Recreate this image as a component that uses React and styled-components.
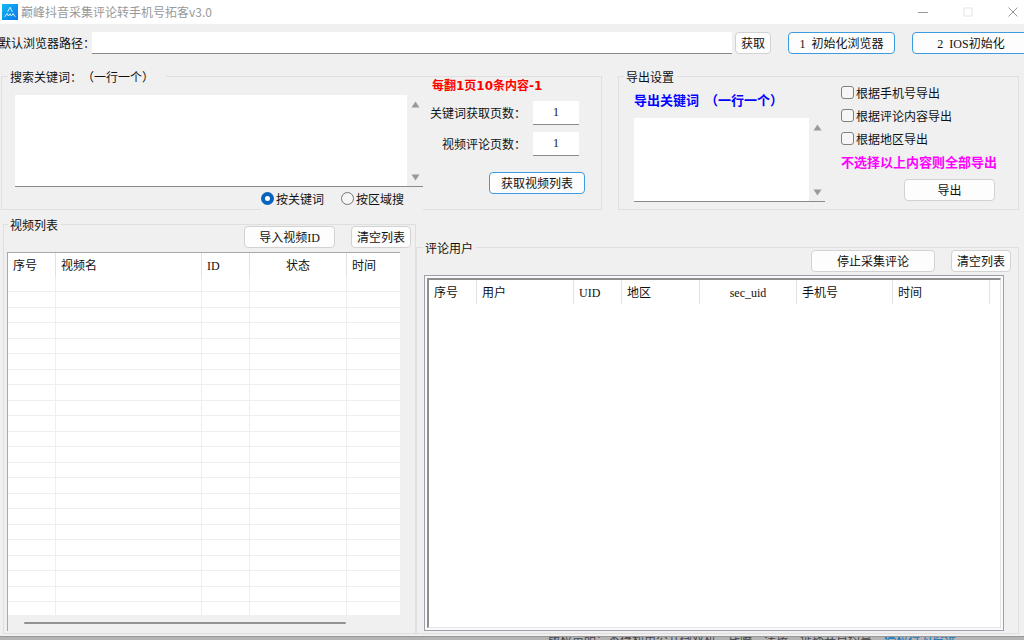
import React from 'react'
import styled, { createGlobalStyle } from 'styled-components'

const GlobalStyle = createGlobalStyle`
  * { box-sizing: border-box; }
  body {
    margin: 0;
    background: #f0f0f0;
    color: #111;
    font: 12px/16px "Noto Sans CJK SC", sans-serif;
    text-spacing-trim: space-all;
  }
  button, input, textarea { font: inherit; color: inherit; }
`

const Window = styled.div`
  display: flex;
  flex-direction: column;
  min-height: 100vh;
  overflow: hidden;
`

const TitleBar = styled.header`
  display: flex;
  align-items: center;
  height: 24px;
  padding: 0 6px 0 2px;
  background: #fff;
  color: #999;
`

const Title = styled.h1`
  flex: 1;
  margin: 0 0 0 3px;
  font-size: 12px;
  line-height: 22px;
  font-weight: 400;
`

const WindowButtons = styled.div`
  display: flex;
  gap: 35px;
`

const WindowButton = styled.button`
  display: flex;
  padding: 0;
  border: 0;
  background: none;
  color: ${({ $faint }) => ($faint ? '#e4e4e4' : '#999')};
`

const PathRow = styled.div`
  display: flex;
  align-items: center;
  padding-top: 8px;
  margin-right: -6px;
`

const PathLabel = styled.label`
  margin-left: -1px;
  width: 93px;
  white-space: nowrap;
`

const TextInput = styled.input`
  min-width: 0;
  height: ${({ $small }) => ($small ? '24px' : '22px')};
  padding: 0 4px;
  border: 0;
  border-bottom: 1px solid #8a8a8a;
  background: #fff;
  outline: 0;
  ${({ $small }) => ($small ? 'width: 46px; text-align: center; font-family: "Liberation Serif", serif;' : 'flex: 1;')}
`

const Button = styled.button`
  flex: none;
  width: ${({ $width }) => $width}px;
  height: 22px;
  margin-left: ${({ $left = 0 }) => $left}px;
  padding: 0;
  border: 1px solid ${({ $accent }) => ($accent ? '#3f9be0' : '#d2d2d2')};
  border-radius: 4px;
  background: #fdfdfd;
  line-height: 20px;
  white-space: nowrap;
`

const Latin = styled.span`
  font-family: "Liberation Serif", serif;
  white-space: pre;
`

const Settings = styled.div`
  display: grid;
  grid-template-columns: 601fr 401fr;
  gap: 16px;
  margin-top: 22px;
  padding: 0 5px 0 1px;
`

const Lists = styled.div`
  flex: 1;
  display: grid;
  grid-template-columns: 413fr 603fr;
  margin-top: 14px;
  padding: 0 5px 2px 3px;
`

const Group = styled.fieldset`
  display: flex;
  flex-direction: ${({ $column }) => ($column ? 'column' : 'row')};
  min-width: 0;
  margin: ${({ $top = 0 }) => $top}px 0 0;
  padding: ${({ $pad }) => $pad};
  border: 1px solid #dfdfdf;
`

// one pixel tall, so the content starts right under the border line
const Legend = styled.legend`
  height: 1px;
  margin-left: ${({ $left }) => $left}px;
  padding: 0 ${({ $right = 3 }) => $right}px 0 2px;
  line-height: 1px;
`

const Column = styled.div`
  display: flex;
  flex-direction: column;
  flex: ${({ $width }) => ($width ? `0 0 ${$width}px` : '1')};
  min-width: 0;
  padding-top: ${({ $top = 0 }) => $top}px;
`

const ScrollBox = styled.div`
  display: flex;
  height: ${({ $height }) => $height}px;
  border-bottom: 1px solid #8a8a8a;
  background: #fff;
`

const TextArea = styled.textarea`
  flex: 1;
  min-width: 0;
  border: 0;
  outline: 0;
  resize: none;
  background: #fff;
`

const ScrollTrack = styled.div`
  display: flex;
  flex-direction: column;
  justify-content: space-between;
  align-items: center;
  width: 16px;
  padding: 6px 0 5px;
  background: #f0f0f0;
`

const Radios = styled.div`
  display: flex;
  align-self: flex-end;
  gap: 17px;
  width: 162px;
  height: 24px;
  margin-bottom: -2px;
  background: #f0f0f0;
`

const Check = styled.label`
  display: flex;
  align-items: center;
  gap: 2px;
  height: 23px;
  white-space: nowrap;
`

const RadioInput = styled.input`
  appearance: none;
  width: 13px;
  height: 13px;
  margin: 0;
  border: 1px solid #777;
  border-radius: 50%;
  background: #f6f6f6;
  &:checked { border: 4px solid #0a63bd; background: #fff; }
`

const CheckInput = styled.input`
  appearance: none;
  width: 13px;
  height: 13px;
  margin: 0;
  border: 1px solid #808080;
  border-radius: 3px;
  background: #f6f6f6;
  &:checked { background: #0a63bd; }
`

const Note = styled.p`
  margin: ${({ $top = 0 }) => $top}px 0 0;
  color: ${({ $color }) => $color};
  font-size: 13px;
  font-weight: 700;
  white-space: pre;
`

const PageNote = styled(Note)`
  padding-left: 2px;
  font-family: "DejaVu Sans", "Noto Sans CJK SC", sans-serif;
  font-size: 12px;
`

const FieldList = styled.div`
  padding-left: 7px;
`

const Field = styled.label`
  display: flex;
  align-items: center;
  gap: 7px;
  margin-top: 7px;
  white-space: nowrap;
  span { width: 96px; text-align: right; }
`

const ButtonLine = styled.div`
  display: flex;
  margin-top: ${({ $top }) => $top}px;
`

const ExportBox = styled.div`
  margin-top: 10px;
  padding-right: 16px;
`

// reaches past the table towards the group's right edge
const Toolbar = styled.div`
  display: flex;
  justify-content: flex-end;
  align-items: center;
  gap: 16px;
  margin: 0 -${({ $reach }) => $reach}px ${({ $gap }) => $gap}px 0;
`

const VideoFrame = styled.div`
  flex: 1;
  display: flex;
  flex-direction: column;
  border: solid #a8a8a8;
  border-width: 1px 0 0 1px;
  background: #fff;
`

const UserFrame = styled.div`
  flex: 1;
  display: flex;
  padding: 2px;
  border: 1px solid #9da0aa;
  background: #fafafa;
`

const UserInner = styled.div`
  flex: 1;
  border: solid;
  border-width: 2px 1px 1px 2px;
  border-color: #8f8f8f #e3e3e3 #e3e3e3 #8f8f8f;
  background: #fff;
`

const Table = styled.table`
  width: 100%;
  table-layout: fixed;
  border-collapse: separate;
  border-spacing: 0;
  td {
    height: 15px;
    padding: 0;
    border: solid #efefef;
    border-width: 0 1px 1px 0;
  }
  tr:nth-child(even) td { height: 16px; }
  tr:last-child td { height: 13px; border-bottom: 0; }
  td:last-child { border-right: 0; }
`

const HeadCell = styled.th`
  height: 24px;
  padding: 0 5px;
  border-right: 1px solid #e2e2e2;
  font-weight: 400;
  text-align: ${({ $center }) => ($center ? 'center' : 'left')};
  white-space: nowrap;
  &:last-child { border-right: 0; }
`

const HScroll = styled.div`
  height: 16px;
  margin-top: auto;
  padding: 7px 54px 0 16px;
  background: #f0f0f0;
`

const Thumb = styled.div`
  height: 2px;
  border-radius: 1px;
  background: #929292;
`

const Behind = styled.footer`
  display: flex;
  height: 4px;
  padding-left: 548px;
  overflow: hidden;
  border-top: 1px solid #999;
  background: #b4b4b4;
  color: #444;
  line-height: 4px;
  white-space: nowrap;
  a { color: #0878bd; text-decoration: none; }
`

const videoColumns = [
  { name: '序号', width: 48 },
  { name: '视频名', width: 146 },
  { name: <Latin>ID</Latin>, width: 48 },
  { name: '状态', width: 97, center: true },
  { name: '时间' },
]

const userColumns = [
  { name: '序号', width: 48 },
  { name: '用户', width: 97 },
  { name: <Latin>UID</Latin>, width: 48 },
  { name: '地区', width: 78 },
  { name: <Latin>sec_uid</Latin>, width: 97, center: true },
  { name: '手机号', width: 96 },
  { name: '时间', width: 97 },
  { name: '' },
]

const ListTable = ({ columns, rows = 0 }) => (
  <Table>
    <colgroup>
      {columns.map((c, i) => <col key={i} width={c.width} />)}
    </colgroup>
    <thead>
      <tr>{columns.map((c, i) => <HeadCell key={i} $center={c.center}>{c.name}</HeadCell>)}</tr>
    </thead>
    <tbody>
      {Array.from({ length: rows }, (_, r) => (
        <tr key={r}>{columns.map((c, i) => <td key={i} />)}</tr>
      ))}
    </tbody>
  </Table>
)

const Scrollable = ({ height, label }) => (
  <ScrollBox $height={height}>
    <TextArea aria-label={label} />
    <ScrollTrack>
      <svg width="9" height="7"><path d="M4.5 0.5L8.5 6.5H0.5Z" fill="#999" /></svg>
      <svg width="9" height="7"><path d="M0.5 0.5H8.5L4.5 6.5Z" fill="#999" /></svg>
    </ScrollTrack>
  </ScrollBox>
)

const Logo = () => (
  <svg width="16" height="16" viewBox="0 0 16 16">
    <defs>
      <linearGradient id="logo" x1="0" y1="0" x2="1" y2="1">
        <stop offset="0" stopColor="#12b8f5" />
        <stop offset="1" stopColor="#0b78ea" />
      </linearGradient>
    </defs>
    <rect width="16" height="16" fill="url(#logo)" />
    <g fill="none" stroke="#d5f1ff" strokeLinejoin="round" strokeLinecap="round">
      <path d="M5.8 7.5L8 3.2L10.2 7.5" />
      <path d="M3 12.5L5 9.5L6.5 12L8 9.8L9.5 12L11 9.5L13 12.5" />
    </g>
  </svg>
)

const App = () => {
  return (
    <>
      <GlobalStyle />
      <Window>
        <TitleBar>
          <Logo />
          <Title>巅峰抖音采集评论转手机号拓客v3.0</Title>
          <WindowButtons>
            <WindowButton aria-label="最小化">
              <svg width="10" height="10"><path d="M0 5.5H10" stroke="currentColor" /></svg>
            </WindowButton>
            <WindowButton aria-label="最大化" $faint>
              <svg width="10" height="10"><rect x="1" y="1" width="8" height="8" fill="none" stroke="currentColor" /></svg>
            </WindowButton>
            <WindowButton aria-label="关闭">
              <svg width="10" height="10"><path d="M0.5 0.5L9.5 9.5M9.5 0.5L0.5 9.5" stroke="currentColor" /></svg>
            </WindowButton>
          </WindowButtons>
        </TitleBar>

        <PathRow>
          <PathLabel htmlFor="path">默认浏览器路径：</PathLabel>
          <TextInput id="path" />
          <Button $width={36} $left={3}>获取</Button>
          <Button $width={107} $left={17} $accent><Latin>1  </Latin>初始化浏览器</Button>
          <Button $width={118} $left={17} $accent><Latin>2  IOS</Latin>初始化</Button>
        </PathRow>

        <Settings>
          <Group $pad="0 0 0 13px">
            <Legend $left={-7} $right={12}>搜索关键词：（一行一个）</Legend>
            <Column $top={18}>
              <Scrollable height={92} label="搜索关键词" />
              <Radios>
                <Check><RadioInput type="radio" name="mode" defaultChecked />按关键词</Check>
                <Check><RadioInput type="radio" name="mode" />按区域搜</Check>
              </Radios>
            </Column>
            <Column $width={178} $top={1}>
              <FieldList>
                <PageNote $color="#f00">每翻1页10条内容-1</PageNote>
                <Field><span>关键词获取页数：</span><TextInput $small defaultValue="1" /></Field>
                <Field><span>视频评论页数：</span><TextInput $small defaultValue="1" /></Field>
                <ButtonLine $top={16}>
                  <Button $width={96} $left={59} $accent>获取视频列表</Button>
                </ButtonLine>
              </FieldList>
            </Column>
          </Group>

          <Group $pad="0 0 6px 15px">
            <Legend $left={-10}>导出设置</Legend>
            <Column $top={15}>
              <Note $color="#00f">导出关键词  （一行一个）</Note>
              <ExportBox><Scrollable height={84} label="导出关键词" /></ExportBox>
            </Column>
            <Column $width={177} $top={4}>
              <Check><CheckInput type="checkbox" />根据手机号导出</Check>
              <Check><CheckInput type="checkbox" />根据评论内容导出</Check>
              <Check><CheckInput type="checkbox" />根据地区导出</Check>
              <Note $color="#f0f" $top={4}>不选择以上内容则全部导出</Note>
              <ButtonLine $top={9}>
                <Button $width={91} $left={63}>导出</Button>
              </ButtonLine>
            </Column>
          </Group>
        </Settings>

        <Lists>
          <Group $column $pad="1px 15px 2px 3px">
            <Legend $left={1}>视频列表</Legend>
            <Toolbar $reach={11} $gap={4}>
              <Button $width={91}>导入视频<Latin>ID</Latin></Button>
              <Button $width={60}>清空列表</Button>
            </Toolbar>
            <VideoFrame>
              <ListTable columns={videoColumns} rows={22} />
              <HScroll><Thumb /></HScroll>
            </VideoFrame>
          </Group>

          <Group $column $top={23} $pad="2px 14px 2px 7px">
            <Legend $left={-1}>评论用户</Legend>
            <Toolbar $reach={7} $gap={3}>
              <Button $width={124}>停止采集评论</Button>
              <Button $width={60}>清空列表</Button>
            </Toolbar>
            <UserFrame>
              <UserInner><ListTable columns={userColumns} /></UserInner>
            </UserFrame>
          </Group>
        </Lists>

        <Behind>
          <span>版权声明：不得利用公共微双机，托腾，法按，证播并日约高。</span>
          <a href="#report">侵权行为投诉</a>
        </Behind>
      </Window>
    </>
  )
}

export default App
